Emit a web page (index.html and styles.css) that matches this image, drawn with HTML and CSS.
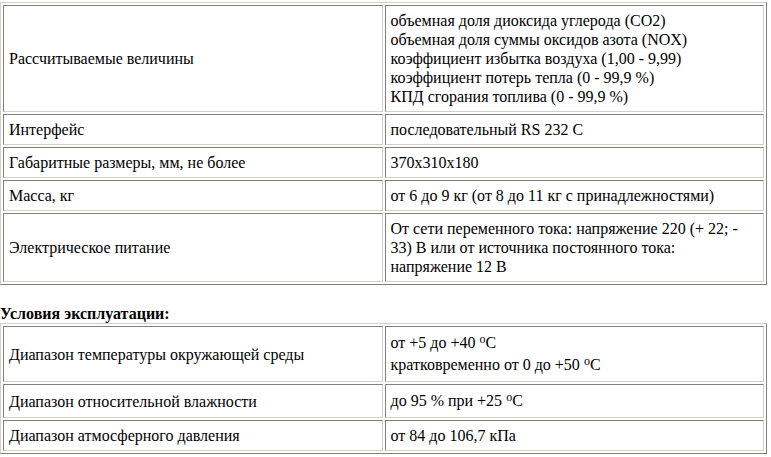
FILE: index.html
```html
<!DOCTYPE html>
<html lang="ru">
<head>
<meta charset="utf-8">
<title>Технические характеристики</title>
<link rel="stylesheet" href="styles.css">
</head>
<body>
<table class="spec">
  <tr>
    <td>Рассчитываемые величины</td>
    <td>
      <div class="ln">объемная доля диоксида углерода (CO2)</div>
      <div class="ln">объемная доля суммы оксидов азота (NOX)</div>
      <div class="ln">коэффициент избытка воздуха (1,00 - 9,99)</div>
      <div class="ln">коэффициент потерь тепла (0 - 99,9 %)</div>
      <div class="ln">КПД сгорания топлива (0 - 99,9 %)</div>
    </td>
  </tr>
  <tr>
    <td>Интерфейс</td>
    <td>последовательный RS 232 C</td>
  </tr>
  <tr>
    <td>Габаритные размеры, мм, не более</td>
    <td>370х310х180</td>
  </tr>
  <tr>
    <td>Масса, кг</td>
    <td>от 6 до 9 кг (от 8 до 11 кг с принадлежностями)</td>
  </tr>
  <tr>
    <td>Электрическое питание</td>
    <td>
      <div class="ln">От сети переменного тока: напряжение 220 (+ 22; -</div>
      <div class="ln">33) В или от источника постоянного тока:</div>
      <div class="ln">напряжение 12 В</div>
    </td>
  </tr>
</table>

<div class="section-title">Условия эксплуатации:</div>

<table class="spec">
  <tr>
    <td>Диапазон температуры окружающей среды</td>
    <td>
      <div class="ln tall">от +5 до +40 <span class="deg">o</span>C</div>
      <div class="ln tall">кратковременно от 0 до +50 <span class="deg">o</span>C</div>
    </td>
  </tr>
  <tr>
    <td>Диапазон относительной влажности</td>
    <td><div class="ln tall">до 95 % при +25 <span class="deg">o</span>C</div></td>
  </tr>
  <tr>
    <td>Диапазон атмосферного давления</td>
    <td>от 84 до 106,7 кПа</td>
  </tr>
</table>
</body>
</html>
```

FILE: styles.css
```css
html, body {
  margin: 0;
  padding: 0;
  background: #ffffff;
}

body {
  font-family: "Liberation Serif", "Times New Roman", serif;
  font-size: 16px;
  line-height: 19px;
  color: #000000;
}

.spec {
  width: 767px;
  table-layout: fixed;
  border-collapse: separate;
  border-spacing: 2px;
  border: 1px solid;
  border-color: #d4d0c8 #808080 #808080 #d4d0c8;
  margin-top: 2px;
}

.spec td {
  width: 50%;
  padding: 5px;
  border: 1px solid;
  border-color: #808080 #d4d0c8 #d4d0c8 #808080;
  vertical-align: middle;
  line-height: 19px;
}

.ln {
  white-space: nowrap;
  height: 19px;
}

.ln.tall {
  height: 22px;
  line-height: 22px;
}

.deg {
  font-size: 12px;
  line-height: 0;
  vertical-align: 5px;
}

.section-title {
  margin-top: 19px;
  font-weight: bold;
  line-height: 19px;
}

.section-title + .spec {
  margin-top: 0;
}
```
